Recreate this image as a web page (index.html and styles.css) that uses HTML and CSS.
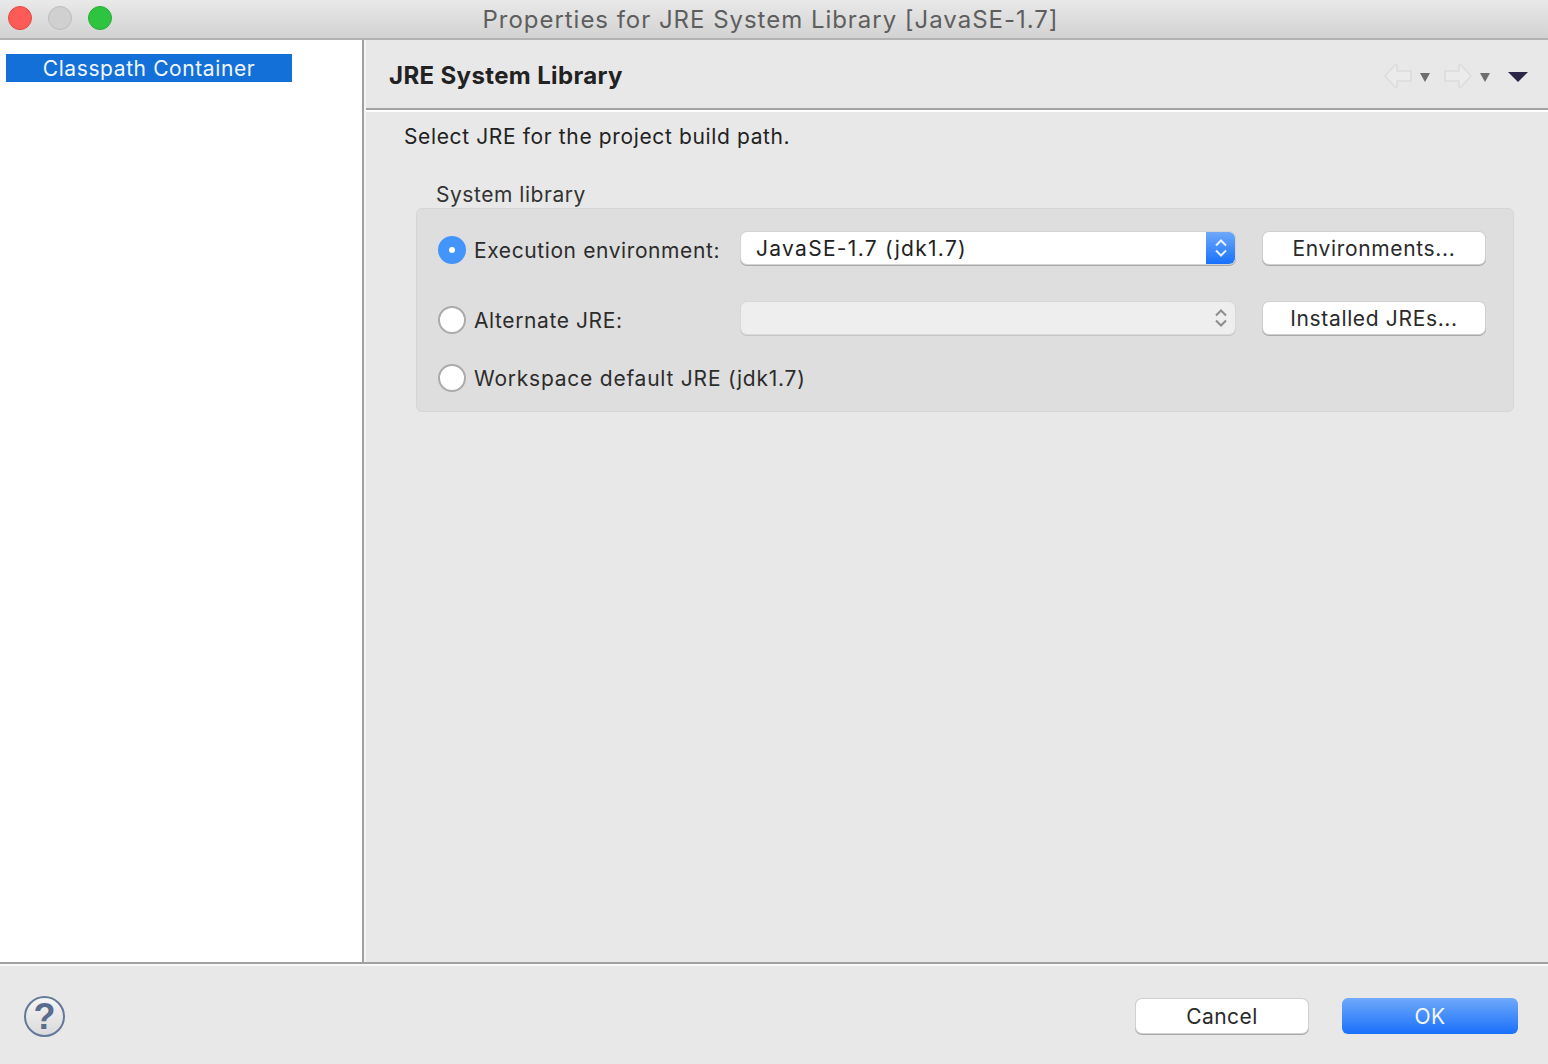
FILE: index.html
```html
<!DOCTYPE html>
<html lang="en">
<head>
<meta charset="utf-8">
<title>Properties for JRE System Library [JavaSE-1.7]</title>
<link rel="stylesheet" href="styles.css">
</head>
<body>
<div class="window">
  <header class="titlebar">
    <div class="lights">
      <span class="light red"></span>
      <span class="light gray"></span>
      <span class="light green"></span>
    </div>
    <div class="title">Properties for JRE System Library [JavaSE-1.7]</div>
  </header>
  <main class="main">
    <aside class="sidebar">
      <div class="tree-item">Classpath Container</div>
    </aside>
    <section class="content">
      <div class="page-head">
        <h1 class="page-title">JRE System Library</h1>
        <div class="nav">
          <svg class="arrow" width="28" height="24" viewBox="0 0 28 24"><path d="M1 12 L11 1 H13 V7 H27 V17 H13 V23 H11 Z" fill="#ebebeb" stroke="#dcdcdc" stroke-width="1.5"/></svg>
          <svg class="caret" width="10" height="9" viewBox="0 0 10 9"><path d="M0 0 H10 L5 9 Z" fill="#6e6e6e"/></svg>
          <svg class="arrow arrow-next" width="28" height="24" viewBox="0 0 28 24"><path d="M27 12 L17 1 H15 V7 H1 V17 H15 V23 H17 Z" fill="#ebebeb" stroke="#dcdcdc" stroke-width="1.5"/></svg>
          <svg class="caret" width="10" height="9" viewBox="0 0 10 9"><path d="M0 0 H10 L5 9 Z" fill="#6e6e6e"/></svg>
          <svg class="menu-caret" width="20" height="10" viewBox="0 0 20 10"><path d="M0 0 H20 L10 10 Z" fill="#2b2648"/></svg>
        </div>
      </div>
      <div class="page-body">
        <p class="intro">Select JRE for the project build path.</p>
        <div class="group-label">System library</div>
        <div class="group">
          <label class="option"><span class="radio checked"></span>Execution environment:</label>
          <div class="select">
            <span class="select-text">JavaSE-1.7 (jdk1.7)</span>
            <span class="stepper active">
              <svg width="14" height="20" viewBox="0 0 14 20"><path d="M2 7.5 L7 2.5 L12 7.5 M2 12.5 L7 17.5 L12 12.5" fill="none" stroke="#e8f1ff" stroke-width="2"/></svg>
            </span>
          </div>
          <button class="btn">Environments...</button>

          <label class="option"><span class="radio"></span>Alternate JRE:</label>
          <div class="select disabled">
            <span class="select-text"></span>
            <span class="stepper">
              <svg width="14" height="20" viewBox="0 0 14 20"><path d="M2 7.5 L7 2.5 L12 7.5 M2 12.5 L7 17.5 L12 12.5" fill="none" stroke="#8c8c8c" stroke-width="2"/></svg>
            </span>
          </div>
          <button class="btn">Installed JREs...</button>

          <label class="option wide"><span class="radio"></span>Workspace default JRE (jdk1.7)</label>
        </div>
      </div>
    </section>
  </main>
  <footer class="footer">
    <div class="help">?</div>
    <div class="actions">
      <button class="btn btn-cancel">Cancel</button>
      <button class="btn btn-ok">OK</button>
    </div>
  </footer>
</div>
</body>
</html>
```
FILE: styles.css
```css
* { box-sizing: border-box; }
html, body { margin: 0; height: 100%; }
body {
  font-family: Inter, "Liberation Sans", Arial, sans-serif;
  font-size: 21px;
  color: #2a2a2a;
  background: #e8e8e8;
  overflow: hidden;
}
.window { display: flex; flex-direction: column; width: 1548px; height: 1064px; }

.titlebar {
  position: relative;
  flex: none;
  height: 40px;
  display: flex;
  align-items: center;
  justify-content: center;
  padding: 0 7px 0 0;
  background: linear-gradient(#e9e9e9, #d2d2d2);
  border-bottom: 2px solid #b2b2b2;
}
.lights { position: absolute; left: 8px; top: 6px; display: flex; gap: 16px; }
.light { width: 24px; height: 24px; border-radius: 50%; border: 1px solid transparent; }
.red { background: #fc5b57; border-color: #e5453f; }
.gray { background: #d0d0d0; border-color: #bcbcbc; }
.green { background: #2fc440; border-color: #26ad36; }
.title { font-size: 24px; color: #5e5e5e; letter-spacing: .97px; }

.main { flex: 1; display: flex; min-height: 0; }
.sidebar {
  flex: none;
  width: 364px;
  padding: 14px 0 0 6px;
  background: #fff;
  border-right: 2px solid #a0a0a0;
}
.tree-item {
  width: 286px;
  height: 28px;
  line-height: 30px;
  text-align: center;
  color: #f2f6ff;
  background: #1470d9;
  letter-spacing: .6px;
}

.content { flex: 1; display: flex; flex-direction: column; background: #e8e8e8; border-left: 2px solid #f4f4f4; }
.page-head {
  flex: none;
  height: 70px;
  display: flex;
  align-items: center;
  justify-content: space-between;
  padding: 2px 20px 0 23px;
  border-bottom: 2px solid #a3a3a3;
  box-shadow: 0 2px 0 #fff;
}
.page-title { margin: 0; font-size: 24px; font-weight: 700; color: #222; letter-spacing: .37px; }
.nav { display: flex; align-items: center; padding-top: 2px; }
.arrow { display: block; }
.arrow-next { margin-left: 14px; }
.caret { display: block; margin-left: 8px; margin-top: 3px; }
.menu-caret { display: block; margin-left: 18px; margin-top: 2px; }

.page-body { flex: 1; padding: 14px 34px 0 38px; }
.intro { margin: 0; height: 26px; line-height: 26px; letter-spacing: .63px; color: #222; }
.group-label { margin: 32px 0 0 32px; height: 26px; line-height: 26px; letter-spacing: .54px; color: #333; }
.group {
  margin: 0 0 0 12px;
  width: 1098px;
  height: 204px;
  padding: 23px 0 0 21px;
  display: grid;
  grid-template-columns: 303px 494px 249px;
  grid-template-rows: 32px 32px 28px;
  row-gap: 38px;
  background: #dedede;
  border: 1px solid #d6d6d6;
  border-radius: 6px;
}
.group > .btn { margin-left: 28px; width: 222px; justify-self: start; }
.option { display: flex; align-items: center; gap: 8px; align-self: center; margin-top: 4px; letter-spacing: .6px; color: #2c2c2c; white-space: nowrap; }
.option.wide { grid-column: 1 / -1; margin-top: -8px; align-self: start; height: 28px; letter-spacing: .77px; }
.radio {
  flex: none;
  position: relative;
  width: 28px;
  height: 28px;
  border-radius: 50%;
  background: #fff;
  border: 2px solid #ababab;
}
.radio.checked { background: #4394fb; border-color: #4394fb; }
.radio.checked::after {
  content: "";
  position: absolute;
  left: 9px;
  top: 9px;
  width: 6px;
  height: 6px;
  border-radius: 50%;
  background: #fff;
}

.select {
  display: flex;
  height: 32px;
  background: #fff;
  border-radius: 6px;
  box-shadow: 0 0 0 1px #d4d4d4, 0 1px 0 1px #a8a8a8;
  overflow: hidden;
}
.select-text { flex: 1; padding-left: 15px; line-height: 33px; letter-spacing: 1.3px; color: #222; }
.stepper { flex: none; width: 29px; display: flex; align-items: center; justify-content: center; }
.stepper.active { background: linear-gradient(#6ea8fa, #1871fb); }
.select.disabled { background: #eeeeee; box-shadow: 0 0 0 1px #d8d8d8, 0 1px 0 1px #c6c6c6; }

.btn {
  height: 32px;
  padding: 0;
  font: inherit;
  color: #2a2a2a;
  letter-spacing: .65px;
  background: #fff;
  border: 0;
  border-radius: 6px;
  box-shadow: 0 0 0 1px #d0d0d0, 0 1px 0 1px #a8a8a8;
}

.footer {
  flex: none;
  height: 102px;
  display: flex;
  align-items: flex-start;
  justify-content: space-between;
  padding: 34px 30px 0 24px;
  border-top: 2px solid #a0a0a0;
  box-shadow: inset 0 2px 0 #f8f8f8;
  background: #e8e8e8;
}
.help {
  width: 41px;
  height: 41px;
  margin-top: -2px;
  text-align: center;
  border-radius: 50%;
  border: 2px solid #64789a;
  background: linear-gradient(#f5f5f5, #dadada);
  color: #5a6d8e;
  font-family: "Liberation Sans", Arial, sans-serif;
  font-size: 36px;
  line-height: 37px;
  font-weight: 700;
}
.actions { display: flex; gap: 34px; }
.btn-cancel { width: 172px; height: 34px; margin-top: 1px; letter-spacing: .4px; }
.btn-ok {
  width: 176px;
  height: 36px;
  color: #f4f8ff;
  letter-spacing: .4px;
  background: linear-gradient(#6fa9fb, #1a70fb);
  box-shadow: none;
}
```
